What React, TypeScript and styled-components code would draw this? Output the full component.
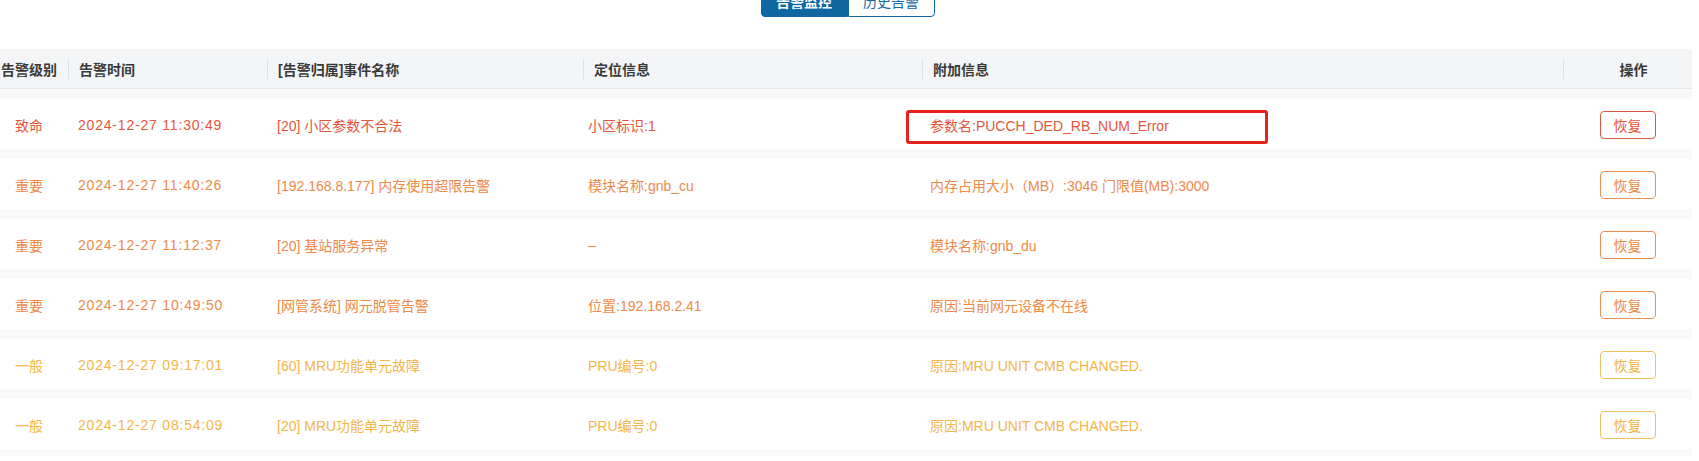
import React from 'react';
import styled, { createGlobalStyle, css } from 'styled-components';

const GlobalStyle = createGlobalStyle`
  html, body {
    margin: 0;
    padding: 0;
    background: #ffffff;
  }
  body {
    font-family: "Liberation Sans", "Noto Sans CJK SC", sans-serif;
    font-size: 14px;
    overflow: hidden;
  }
`;

type Level = 'critical' | 'major' | 'minor';

const levelText: Record<Level, string> = {
  critical: '#e4553b',
  major: '#ed8a4a',
  minor: '#f3b64b',
};

const levelBorder: Record<Level, string> = {
  critical: '#d9583f',
  major: '#e98f52',
  minor: '#f1c061',
};

const Page = styled.div`
  width: 1699px;
  min-height: 461px;
`;

const TabBar = styled.div`
  display: flex;
  justify-content: center;
  margin-top: -15px;
  padding-right: 4px;
`;

const Tab = styled.button<{ $active?: boolean }>`
  height: 32px;
  width: 87px;
  padding: 0;
  font-family: inherit;
  font-size: 14px;
  border: 1px solid #0f66a0;
  background: ${(p) => (p.$active ? '#0f66a0' : '#ffffff')};
  color: ${(p) => (p.$active ? '#ffffff' : '#0f66a0')};
  font-weight: ${(p) => (p.$active ? 600 : 400)};
  border-radius: ${(p) => (p.$active ? '4px 0 0 4px' : '0 4px 4px 0')};
`;

const Table = styled.div`
  margin: 32px 7px 0 -10px;
`;

const gridCols = css`
  display: grid;
  grid-template-columns: 78px 199px 316px 339px 641px 129px;
  align-items: center;
`;

const HeaderRow = styled.div`
  ${gridCols};
  box-sizing: border-box;
  height: 40px;
  background: #f4f5f7;
  border-bottom: 1px solid #e4e6ec;
  border-radius: 4px 4px 0 0;
  color: #3a3a3a;
  font-weight: 600;
`;

const HeadCell = styled.div<{ $align?: 'center' | 'left'; $sep?: boolean }>`
  position: relative;
  height: 100%;
  display: flex;
  align-items: center;
  justify-content: ${(p) => (p.$align === 'center' ? 'center' : 'flex-start')};
  padding-left: ${(p) => (p.$align === 'center' ? (p.$sep ? '12px' : '0') : '11px')};
  ${(p) =>
    p.$sep &&
    css`
      &::before {
        content: '';
        position: absolute;
        left: 0;
        top: 10px;
        height: 20px;
        width: 1px;
        background: #dedfe3;
      }
    `}
`;

const Body = styled.div`
  display: flex;
  flex-direction: column;
  gap: 9px;
  padding: 10px 0 6px;
  background: #f9f9fa;
`;

const Row = styled.div<{ $level: Level }>`
  ${gridCols};
  position: relative;
  height: 51px;
  background: #ffffff;
  border-radius: 4px;
  box-shadow: 0 1px 2px rgba(0, 0, 0, 0.025);
  color: ${(p) => levelText[p.$level]};
`;

const Cell = styled.div<{ $align?: 'center' | 'left'; $mono?: boolean; $pad?: number }>`
  display: flex;
  align-items: center;
  justify-content: ${(p) => (p.$align === 'center' ? 'center' : 'flex-start')};
  padding-left: ${(p) => (p.$align === 'center' ? 0 : p.$pad ?? 10)}px;
  white-space: nowrap;
  ${(p) =>
    p.$mono &&
    css`
      letter-spacing: 0.8px;
    `}
`;

const RestoreButton = styled.button<{ $level: Level }>`
  width: 56px;
  height: 28px;
  padding: 0;
  font-family: inherit;
  font-size: 14px;
  background: #ffffff;
  border: 1px solid ${(p) => levelBorder[p.$level]};
  color: ${(p) => levelText[p.$level]};
  border-radius: 4px;
`;

const Highlight = styled.div`
  position: absolute;
  left: 916px;
  top: 11px;
  width: 362px;
  height: 34px;
  box-sizing: border-box;
  border: 3px solid #e3231c;
  border-radius: 3px;
  pointer-events: none;
`;

type Alarm = {
  level: Level;
  levelName: string;
  time: string;
  event: string;
  location: string;
  extra: string;
  marked?: boolean;
};

const alarms: Alarm[] = [
  {
    level: 'critical',
    levelName: '致命',
    time: '2024-12-27 11:30:49',
    event: '[20] 小区参数不合法',
    location: '小区标识:1',
    extra: '参数名:PUCCH_DED_RB_NUM_Error',
    marked: true,
  },
  {
    level: 'major',
    levelName: '重要',
    time: '2024-12-27 11:40:26',
    event: '[192.168.8.177] 内存使用超限告警',
    location: '模块名称:gnb_cu',
    extra: '内存占用大小（MB）:3046 门限值(MB):3000',
  },
  {
    level: 'major',
    levelName: '重要',
    time: '2024-12-27 11:12:37',
    event: '[20] 基站服务异常',
    location: '–',
    extra: '模块名称:gnb_du',
  },
  {
    level: 'major',
    levelName: '重要',
    time: '2024-12-27 10:49:50',
    event: '[网管系统] 网元脱管告警',
    location: '位置:192.168.2.41',
    extra: '原因:当前网元设备不在线',
  },
  {
    level: 'minor',
    levelName: '一般',
    time: '2024-12-27 09:17:01',
    event: '[60] MRU功能单元故障',
    location: 'PRU编号:0',
    extra: '原因:MRU UNIT CMB CHANGED.',
  },
  {
    level: 'minor',
    levelName: '一般',
    time: '2024-12-27 08:54:09',
    event: '[20] MRU功能单元故障',
    location: 'PRU编号:0',
    extra: '原因:MRU UNIT CMB CHANGED.',
  },
];

export default function App() {
  return (
    <Page>
      <GlobalStyle />
      <TabBar>
        <Tab $active>告警监控</Tab>
        <Tab>历史告警</Tab>
      </TabBar>
      <Table>
        <HeaderRow>
          <HeadCell $align="center">告警级别</HeadCell>
          <HeadCell $sep>告警时间</HeadCell>
          <HeadCell $sep>[告警归属]事件名称</HeadCell>
          <HeadCell $sep>定位信息</HeadCell>
          <HeadCell $sep>附加信息</HeadCell>
          <HeadCell $sep $align="center">操作</HeadCell>
        </HeaderRow>
        <Body>
          {alarms.map((a, i) => (
            <Row key={i} $level={a.level}>
              <Cell $align="center">{a.levelName}</Cell>
              <Cell $mono>{a.time}</Cell>
              <Cell>{a.event}</Cell>
              <Cell $pad={5}>{a.location}</Cell>
              <Cell $pad={8}>{a.extra}</Cell>
              <Cell $align="center">
                <RestoreButton $level={a.level}>恢复</RestoreButton>
              </Cell>
              {a.marked && <Highlight />}
            </Row>
          ))}
        </Body>
      </Table>
    </Page>
  );
}
